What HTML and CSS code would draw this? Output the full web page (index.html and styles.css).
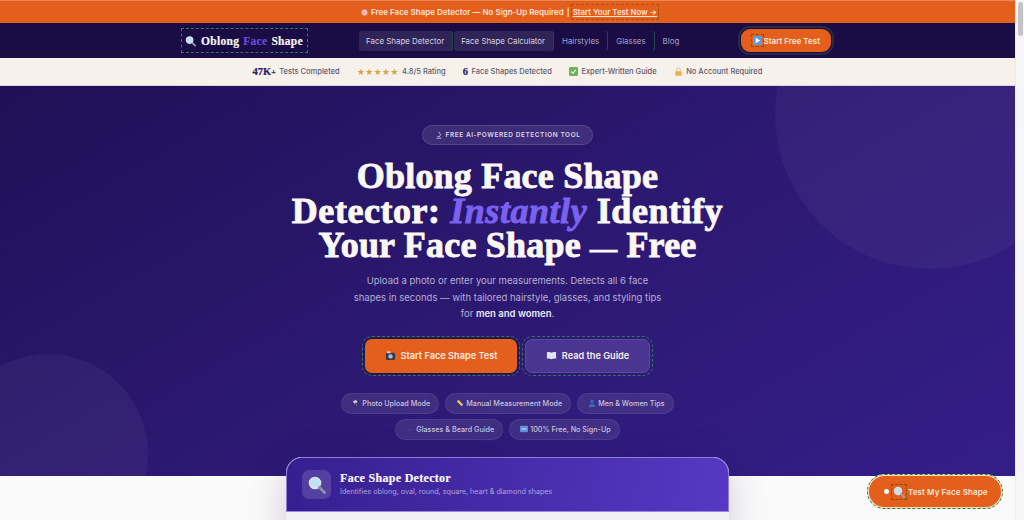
FILE: index.html
```html
<!DOCTYPE html>
<html lang="en">
<head>
<meta charset="utf-8">
<title>Oblong Face Shape Detector</title>
<link rel="stylesheet" href="styles.css">
</head>
<body>
<div class="frame">
  <div class="page">
    <div class="announce">
      <svg class="ico" viewBox="0 0 10 10"><circle cx="5" cy="5" r="4.5" fill="#f0a0a0"/><circle cx="5" cy="5" r="2.8" fill="#fff"/><circle cx="5" cy="5" r="1.5" fill="#e35f5f"/></svg>
      <span>Free Face Shape Detector — No Sign-Up Required</span>
      <span class="sep">|</span>
      <a class="announce-link">Start Your Test Now →</a>
    </div>
    <header class="nav">
      <div class="logo">
        <svg class="logo-ico" viewBox="0 0 12 12"><circle cx="5" cy="5" r="3.6" fill="#bfe0f5" stroke="#dfe6ee" stroke-width="1.2"/><path d="M8 8l3 3" stroke="#9aa3b0" stroke-width="1.8" stroke-linecap="round"/></svg>
        <span class="logo-text">Oblong</span><span class="logo-text accent">Face</span><span class="logo-text">Shape</span>
      </div>
      <nav class="links">
        <a class="link on">Face Shape Detector</a>
        <a class="link on">Face Shape Calculator</a>
        <a class="link">Hairstyles</a>
        <a class="link">Glasses</a>
        <a class="link">Blog</a>
      </nav>
      <a class="nav-cta">
        <svg class="cta-ico" viewBox="0 0 10 10"><rect width="10" height="10" rx="1" fill="#5a9be0"/><path d="M3 2l5 3-5 3z" fill="#fff"/></svg>
        Start Free Test
      </a>
    </header>
    <div class="stats">
      <div class="stat"><b class="num">47K<i>+</i></b><span>Tests Completed</span></div>
      <div class="stat"><span class="stars">★★★★★</span><span>4.8/5 Rating</span></div>
      <div class="stat"><b class="num">6</b><span>Face Shapes Detected</span></div>
      <div class="stat"><svg class="ico" viewBox="0 0 10 10"><rect width="10" height="10" rx="1.5" fill="#6cb35a"/><path d="M2.5 5l2 2 3-4" stroke="#fff" stroke-width="1.2" fill="none"/></svg><span>Expert-Written Guide</span></div>
      <div class="stat"><svg class="ico" viewBox="0 0 10 10"><path d="M3 5V3.2a2 2 0 014 0V5" stroke="#c9c3b6" stroke-width="1.1" fill="none"/><rect x="1.5" y="4.6" width="7" height="5.2" rx="1" fill="#f0ae45"/></svg><span>No Account Required</span></div>
    </div>
    <main class="hero">
      <div class="blob blob-a"></div>
      <div class="blob blob-b"></div>
      <div class="badge">
        <svg class="ico" viewBox="0 0 10 10"><path d="M5 1l2 4-2 2M2 9h6M3 7h3" stroke="#cfcbe0" stroke-width="1" fill="none"/></svg>
        FREE AI-POWERED DETECTION TOOL
      </div>
      <h1 class="title">Oblong Face Shape<br><span class="wide-line">Detector: <em>Instantly</em> Identify</span><br>Your Face Shape <span class="dash">—</span> Free</h1>
      <p class="lead">Upload a photo or enter your measurements. Detects all 6 face<br>shapes in seconds — with tailored hairstyle, glasses, and styling tips<br>for <b>men and women</b>.</p>
      <div class="actions">
        <a class="btn primary">
          <svg class="btn-ico" viewBox="0 0 12 12"><rect x="1" y="3" width="10" height="8" rx="1.5" fill="#3a3a44"/><circle cx="6" cy="7" r="2.4" fill="#9fc3dc"/><rect x="2" y="1.5" width="4" height="2" fill="#d9d4c8"/></svg>
          Start Face Shape Test
        </a>
        <a class="btn ghost">
          <svg class="btn-ico" viewBox="0 0 12 12"><path d="M1 2.5c2-.6 3.6-.4 5 .5 1.4-.9 3-1.100 5-.5v7c-2-.6-3.600-.4-5 .5-1.400-.9-3-1.100-5-.5z" fill="#dfe6f2"/></svg>
          Read the Guide
        </a>
      </div>
      <div class="chips">
        <span class="chip"><svg class="chip-ico" viewBox="0 0 10 10"><path d="M1 3l4-2 2 3-4 2z" fill="#c9ccd6"/><path d="M5 6l1 3" stroke="#7d7f8c"/></svg>Photo Upload Mode</span>
        <span class="chip"><svg class="chip-ico" viewBox="0 0 10 10"><path d="M1 3l2-2 6 6-2 2z" fill="#eec25f"/></svg>Manual Measurement Mode</span>
        <span class="chip"><svg class="chip-ico" viewBox="0 0 10 10"><circle cx="5" cy="3" r="2.200" fill="#3f68b8"/><path d="M1 10c0-3 2-4 4-4s4 1 4 4z" fill="#3f68b8"/></svg>Men &amp; Women Tips</span>
      </div>
      <div class="chips">
        <span class="chip"><svg class="chip-ico" viewBox="0 0 10 10"><path d="M1 6h8" stroke="#4a3f86" stroke-width="1.400"/></svg>Glasses &amp; Beard Guide</span>
        <span class="chip"><svg class="chip-ico" viewBox="0 0 10 10"><rect y="1" width="10" height="8" rx="1.500" fill="#5b93dc"/><path d="M2 5h6" stroke="#fff"/></svg>100% Free, No Sign-Up</span>
      </div>
    </main>
    <section class="below">
      <div class="tool">
        <div class="tool-head">
          <div class="tool-ico"><svg viewBox="0 0 14 14" width="20" height="20"><circle cx="5.600" cy="5.600" r="3.800" fill="#bfe3f5" stroke="#d9e2ea" stroke-width="1.200"/><path d="M8.600 8.600l3.800 3.800" stroke="#8d93a5" stroke-width="1.900" stroke-linecap="round"/></svg></div>
          <div class="tool-text">
            <h2 class="tool-title">Face Shape Detector</h2>
            <p class="tool-sub">Identifies oblong, oval, round, square, heart &amp; diamond shapes</p>
          </div>
        </div>
      </div>
    </section>
  </div>
  <div class="scrollbar"><div class="thumb"></div></div>
  <a class="fab">
    <span class="dot"></span>
    <svg class="fab-ico" viewBox="0 0 12 12"><circle cx="5" cy="5" r="3.600" fill="#bfe0f5" stroke="#dfe6ee" stroke-width="1.200"/><path d="M8 8l3 3" stroke="#9aa3b0" stroke-width="1.800" stroke-linecap="round"/></svg>
    Test My Face Shape
  </a>
</div>
</body>
</html>
```
FILE: styles.css
```css
* { box-sizing: border-box; }
html, body { margin: 0; height: 520px; overflow: hidden; }
body { font-family: "Inter", "Noto Sans", sans-serif; background: #fff; }
a { color: inherit; text-decoration: none; }

.frame { display: flex; height: 520px; position: relative; overflow: hidden; }
.page { flex: 1; min-width: 0; display: flex; flex-direction: column; }
.scrollbar { width: 9px; background: #f6f5f8; padding: 2px 2px; border-left: 1px solid #ecebf1; }
.thumb { width: 5px; height: 34px; border-radius: 3px; background: #c4c4c8; }

.ico { width: 9px; height: 9px; flex: none; }

.announce {
  height: 23px; background: #e35f1b; color: #fbe6da;
  display: flex; align-items: center; justify-content: center; gap: 3px;
  font-size: 8px; font-weight: 600; padding-left: 4px;
  border-top: 1px solid #ea8a52;
}
.announce .ico { width: 7px; height: 7px; }
.announce-link { font-size: 7.800px; text-decoration: underline; outline: 1px dashed rgba(120,80,10,.6); padding: 2px 1px; margin-left: -1px; }

.nav {
  height: 35px; background: #1a0c45; display: flex; align-items: center;
  padding-left: 181px;
}
.logo {
  width: 127px; height: 25px; display: flex; align-items: center; gap: 4px; padding-left: 4px;
  outline: 1px dashed #2e7d55; outline-offset: -1px;
}
.logo-ico { width: 11px; height: 12px; margin-right: 1px; }
.logo-text { font-family: "Liberation Serif", serif; font-weight: 700; font-size: 11.500px; color: #f6f3ee; letter-spacing: .3px; -webkit-text-stroke: .2px currentColor; }
.logo-text.accent { color: #6a4bdc; }

.links { display: flex; align-items: center; gap: 2px; margin-left: 51px; }
.link {
  height: 20px; padding: 0 7px; display: flex; align-items: center;
  font-size: 7.900px; color: #a8a2c6; border-radius: 3px;
  border-right: 1px solid transparent;
  box-shadow: 1px 0 0 #1f4a45;
}
.link.on { background: #2f2457; color: #d6d2e4; }
.link:last-child { box-shadow: none; }

.nav-cta {
  margin-left: 54px; width: 90px; height: 23px; border-radius: 9px; background: #e35f1b;
  color: #fbeadf; font-size: 8px; font-weight: 600;
  display: flex; align-items: center; justify-content: center; gap: 2px;
  outline: 2px solid #2a2a42; outline-offset: 1px;
}
.cta-ico { width: 9px; height: 9px; outline: 1px dashed #8a4f10; outline-offset: 1px; }

.stats {
  height: 28px; background: #f6f1ea; display: flex; align-items: center; justify-content: center; gap: 17px;
  font-size: 7.500px; color: #5d5a70; font-weight: 500;
  border-bottom: 1px solid #d8d2e4;
}
.stat { display: flex; align-items: center; gap: 3.500px; }
.num { font-family: "Liberation Serif", serif; font-size: 10.500px; color: #2a1a66; font-weight: 700; -webkit-text-stroke: .2px currentColor; }
.num i { font-style: normal; font-size: 8px; }
.stars { color: #d9a24a; font-size: 8px; }

.hero {
  height: 390px; position: relative; overflow: hidden; flex: none;
  background: linear-gradient(150deg, #1f1056 0%, #2b186f 45%, #341e88 100%);
  display: flex; flex-direction: column; align-items: center; padding-top: 39px;
}
.blob { position: absolute; border-radius: 50%; background: rgba(255,255,255,.045); }
.blob-a { width: 310px; height: 310px; right: -70px; top: -127px; }
.blob-b { width: 200px; height: 200px; left: -52px; bottom: -78px; }

.badge {
  position: relative; height: 20px; padding: 0 12px; border-radius: 10px;
  display: flex; align-items: center; gap: 3px;
  background: rgba(255,255,255,.1); border: 1px solid rgba(255,255,255,.12);
  color: #d9d5e8; font-size: 6.500px; font-weight: 600; letter-spacing: .55px;
}
.badge .ico { width: 8px; height: 8px; }

.title {
  position: relative; margin: 14px 0 0; text-align: center; color: #fbf8f3;
  font-family: "Liberation Serif", serif; font-weight: 700; font-size: 36px; line-height: 34.500px;
  letter-spacing: .2px; -webkit-text-stroke: .9px #fbf8f3;
}
.title em { color: #7a62f0; font-style: italic; -webkit-text-stroke-color: #7a62f0; }
.wide-line { letter-spacing: .55px; }
.dash { font-size: 27px; line-height: 1; }

.lead {
  position: relative; margin: 10.500px 0 0; text-align: center; color: #b5afd4;
  font-size: 9.500px; line-height: 16.500px;
}
.lead b { color: #ece9f5; font-weight: 600; }

.actions { position: relative; display: flex; gap: 8px; margin-top: 16px; }
.btn {
  height: 34px; border-radius: 7px; display: flex; align-items: center; justify-content: center; gap: 5px;
  font-size: 9.200px; font-weight: 600; color: #f6ede6;
  outline: 1px dashed #2f7a55; outline-offset: 2px;
}
.btn.primary { width: 152px; background: #e35f1b; box-shadow: 0 0 0 2px #1f1a55; }
.btn.ghost { width: 125px; background: #4a3590; border: 1px solid #5d49a3; }
.btn-ico { width: 11px; height: 11px; }

.chips { position: relative; display: flex; justify-content: center; gap: 6px; }
.actions + .chips { margin-top: 20px; }
.chips + .chips { margin-top: 5px; }
.chip {
  height: 21px; padding: 0 8px 0 10px; border-radius: 11px; display: flex; align-items: center; gap: 2px;
  background: rgba(255,255,255,.09); border: 1px solid rgba(255,255,255,.07);
  color: #c9c4de; font-size: 7.200px; font-weight: 500;
}
.chip-ico { width: 8px; height: 8px; }

.below { flex: 1; background: #fbfafa; display: flex; justify-content: center; min-height: 0; }
.tool {
  width: 443px; height: 80px; margin-top: -19px; position: relative; background: #f1f0f3;
  border-radius: 16px 16px 0 0; box-shadow: 0 10px 40px rgba(30,10,80,.2);
}
.tool-head {
  height: 55px; border: 1px solid #8f7ed8; border-bottom: 1px solid #9b87e3;
  border-radius: 16px 16px 0 0; display: flex; align-items: center; gap: 9px; padding: 0 15px;
  background: linear-gradient(100deg, #351f8f, #5738c4);
}
.tool-ico {
  width: 29px; height: 29px; border-radius: 7px; background: rgba(255,255,255,.14);
  display: flex; align-items: center; justify-content: center;
}
.tool-text { padding-bottom: 2px; }
.tool-title { margin: 0; color: #f8f5f0; font-family: "Liberation Serif", serif; font-size: 12px; font-weight: 700; letter-spacing: .3px; -webkit-text-stroke: .2px currentColor; }
.tool-sub { margin: 1px 0 0; color: #aca4dc; font-size: 7.200px; }

.fab {
  position: absolute; left: 869px; top: 476px; width: 132px; height: 31px; border-radius: 16px;
  background: #e35f1b; color: #f5e6da; font-size: 8px; font-weight: 600; letter-spacing: .1px;
  display: flex; align-items: center; padding-left: 15px; gap: 2.500px;
  outline: 1px dashed #2f7a55; outline-offset: 1px;
  box-shadow: 0 0 0 2px #f0dfb5;
}
.dot { width: 5px; height: 5px; border-radius: 50%; background: #fff; }
.fab-ico { width: 14px; height: 14px; padding: 1px; outline: 1px dashed #8a4f10; }
```
